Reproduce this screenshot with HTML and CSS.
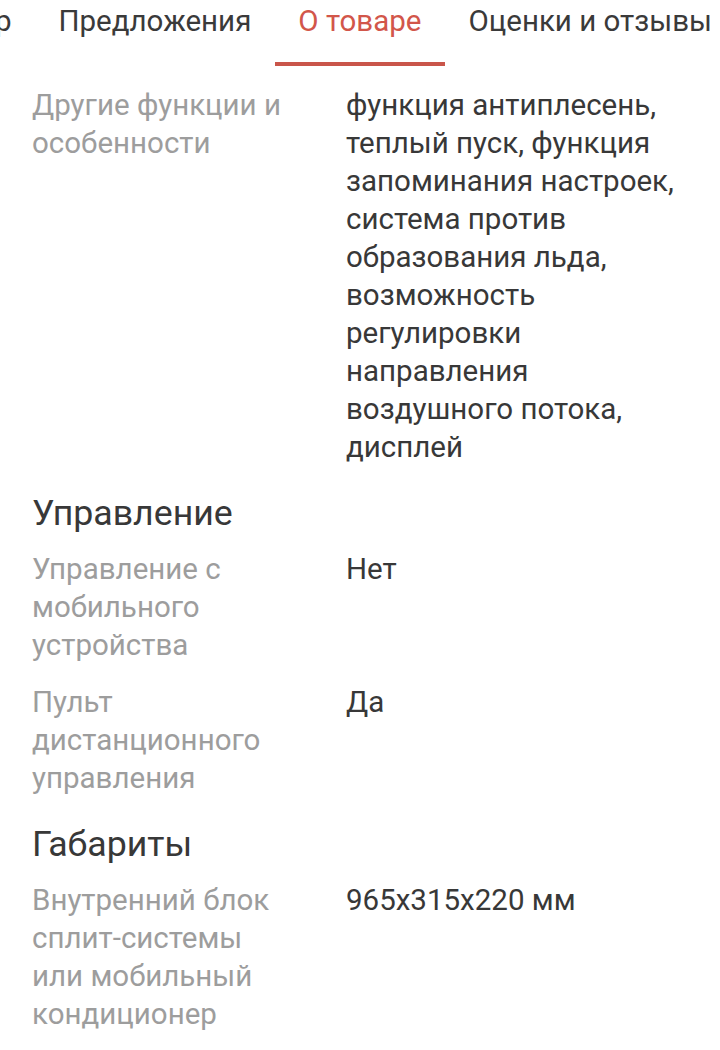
FILE: index.html
```html
<!DOCTYPE html>
<html lang="ru">
<head>
<meta charset="utf-8">
<link rel="stylesheet" href="styles.css">
</head>
<body>
<nav class="tabs">
  <div class="tabs-strip">
    <span class="tab">Обзор</span>
    <span class="tab">Предложения</span>
    <span class="tab tab-active">О товаре</span>
    <span class="tab">Оценки и отзывы</span>
  </div>
</nav>
<main class="specs">
  <section class="group">
    <div class="row">
      <div class="label">Другие функции и особенности</div>
      <div class="value">функция антиплесень, теплый пуск, функция запоминания настроек, система против образования льда, возможность регулировки направления воздушного потока, дисплей</div>
    </div>
  </section>
  <section class="group">
    <h2 class="group-title">Управление</h2>
    <div class="row">
      <div class="label">Управление с мобильного устройства</div>
      <div class="value">Нет</div>
    </div>
    <div class="row">
      <div class="label">Пульт дистанционного управления</div>
      <div class="value">Да</div>
    </div>
  </section>
  <section class="group">
    <h2 class="group-title">Габариты</h2>
    <div class="row">
      <div class="label">Внутренний блок сплит-системы или мобильный кондиционер</div>
      <div class="value">965x315x220 мм</div>
    </div>
  </section>
</main>
</body>
</html>
```

FILE: styles.css
```css
html, body {
  margin: 0;
  padding: 0;
  background: #ffffff;
}

body {
  font-family: Roboto, "Noto Sans", "Liberation Sans", sans-serif;
  color: #383838;
  width: 720px;
  overflow: hidden;
}

.tabs {
  overflow: hidden;
  height: 66px;
}

.tabs-strip {
  display: flex;
  margin-left: -97px;
  white-space: nowrap;
}

.tab {
  display: block;
  flex: none;
  padding: 2px 23.5px 22px;
  font-size: 29.5px;
  line-height: 38px;
  color: #3a3a3a;
  border-bottom: 4px solid transparent;
}

.tab-active {
  color: #d2564a;
  border-bottom-color: #c9554a;
}

.specs {
  padding: 20px 32px 0 32px;
}

.group {
  display: flex;
  flex-direction: column;
}

.group-title {
  margin: 6px 0 15px;
  font-size: 35.7px;
  line-height: 44px;
  font-weight: 400;
  color: #383838;
}

.row {
  display: grid;
  grid-template-columns: 256px 1fr;
  column-gap: 58px;
  margin-bottom: 19px;
  font-size: 29.5px;
  line-height: 38px;
}

.label {
  color: #9d9d9d;
}

.value {
  color: #383838;
  padding-right: 4px;
}
```
